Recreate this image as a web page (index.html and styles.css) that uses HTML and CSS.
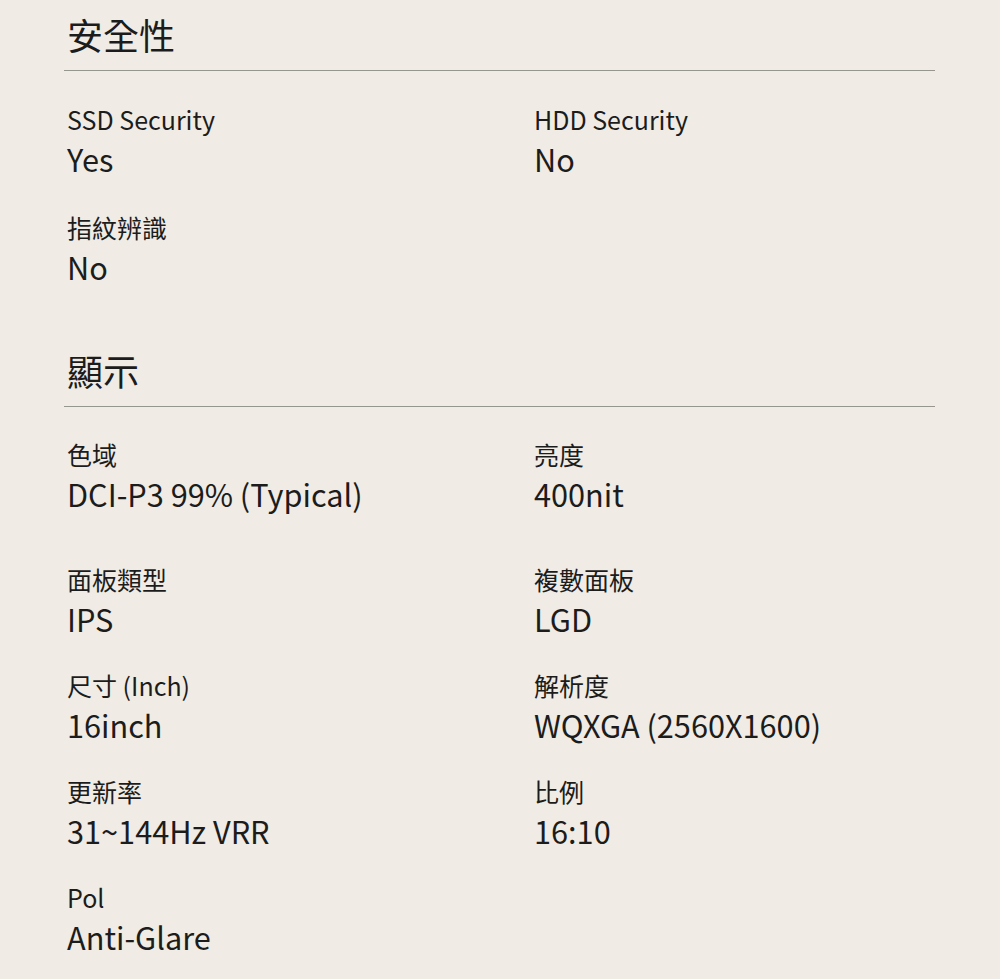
FILE: index.html
```html
<!DOCTYPE html>
<html lang="zh-Hant">
<head>
<meta charset="utf-8">
<title>規格</title>
<link rel="stylesheet" href="styles.css">
</head>
<body>
<main class="specs">
  <section class="section">
    <h2 class="section-title">安全性</h2>
    <div class="grid">
      <div class="item"><div class="label">SSD Security</div><div class="value">Yes</div></div>
      <div class="item"><div class="label">HDD Security</div><div class="value">No</div></div>
      <div class="item"><div class="label">指紋辨識</div><div class="value">No</div></div>
    </div>
  </section>
  <section class="section">
    <h2 class="section-title">顯示</h2>
    <div class="grid grid-display">
      <div class="item item-first"><div class="label">色域</div><div class="value">DCI-P3 99% (Typical)</div></div>
      <div class="item item-first"><div class="label">亮度</div><div class="value">400nit</div></div>
      <div class="item"><div class="label">面板類型</div><div class="value">IPS</div></div>
      <div class="item"><div class="label">複數面板</div><div class="value">LGD</div></div>
      <div class="item"><div class="label">尺寸 (Inch)</div><div class="value">16inch</div></div>
      <div class="item"><div class="label">解析度</div><div class="value">WQXGA (2560X1600)</div></div>
      <div class="item"><div class="label">更新率</div><div class="value">31~144Hz VRR</div></div>
      <div class="item"><div class="label">比例</div><div class="value">16:10</div></div>
      <div class="item"><div class="label">Pol</div><div class="value">Anti-Glare</div></div>
    </div>
  </section>
</main>
</body>
</html>
```
FILE: styles.css
```css
html, body {
  margin: 0;
  padding: 0;
  background: #f0ece5;
}

body {
  font-family: "Noto Sans CJK TC", "Noto Sans", sans-serif;
  color: #1c1c1c;
  height: 979px;
  overflow: hidden;
}

.specs {
  margin-left: 64px;
  width: 871px;
  padding-top: 9px;
}

.section + .section {
  margin-top: 56px;
}

.section-title {
  margin: 0;
  font-size: 36px;
  font-weight: 400;
  line-height: 50px;
  padding: 0 0 11px 3px;
  border-bottom: 1.5px solid #96968e;
}

.grid {
  display: grid;
  grid-template-columns: 467px 1fr;
  row-gap: 28px;
  padding: 30px 0 0 3px;
}

.grid-display {
  row-gap: 26px;
  padding-top: 29px;
}

.item-first {
  margin-bottom: 19px;
}

.label {
  font-size: 25px;
  line-height: 36px;
}

.value {
  font-size: 30.7px;
  line-height: 44px;
}
```
